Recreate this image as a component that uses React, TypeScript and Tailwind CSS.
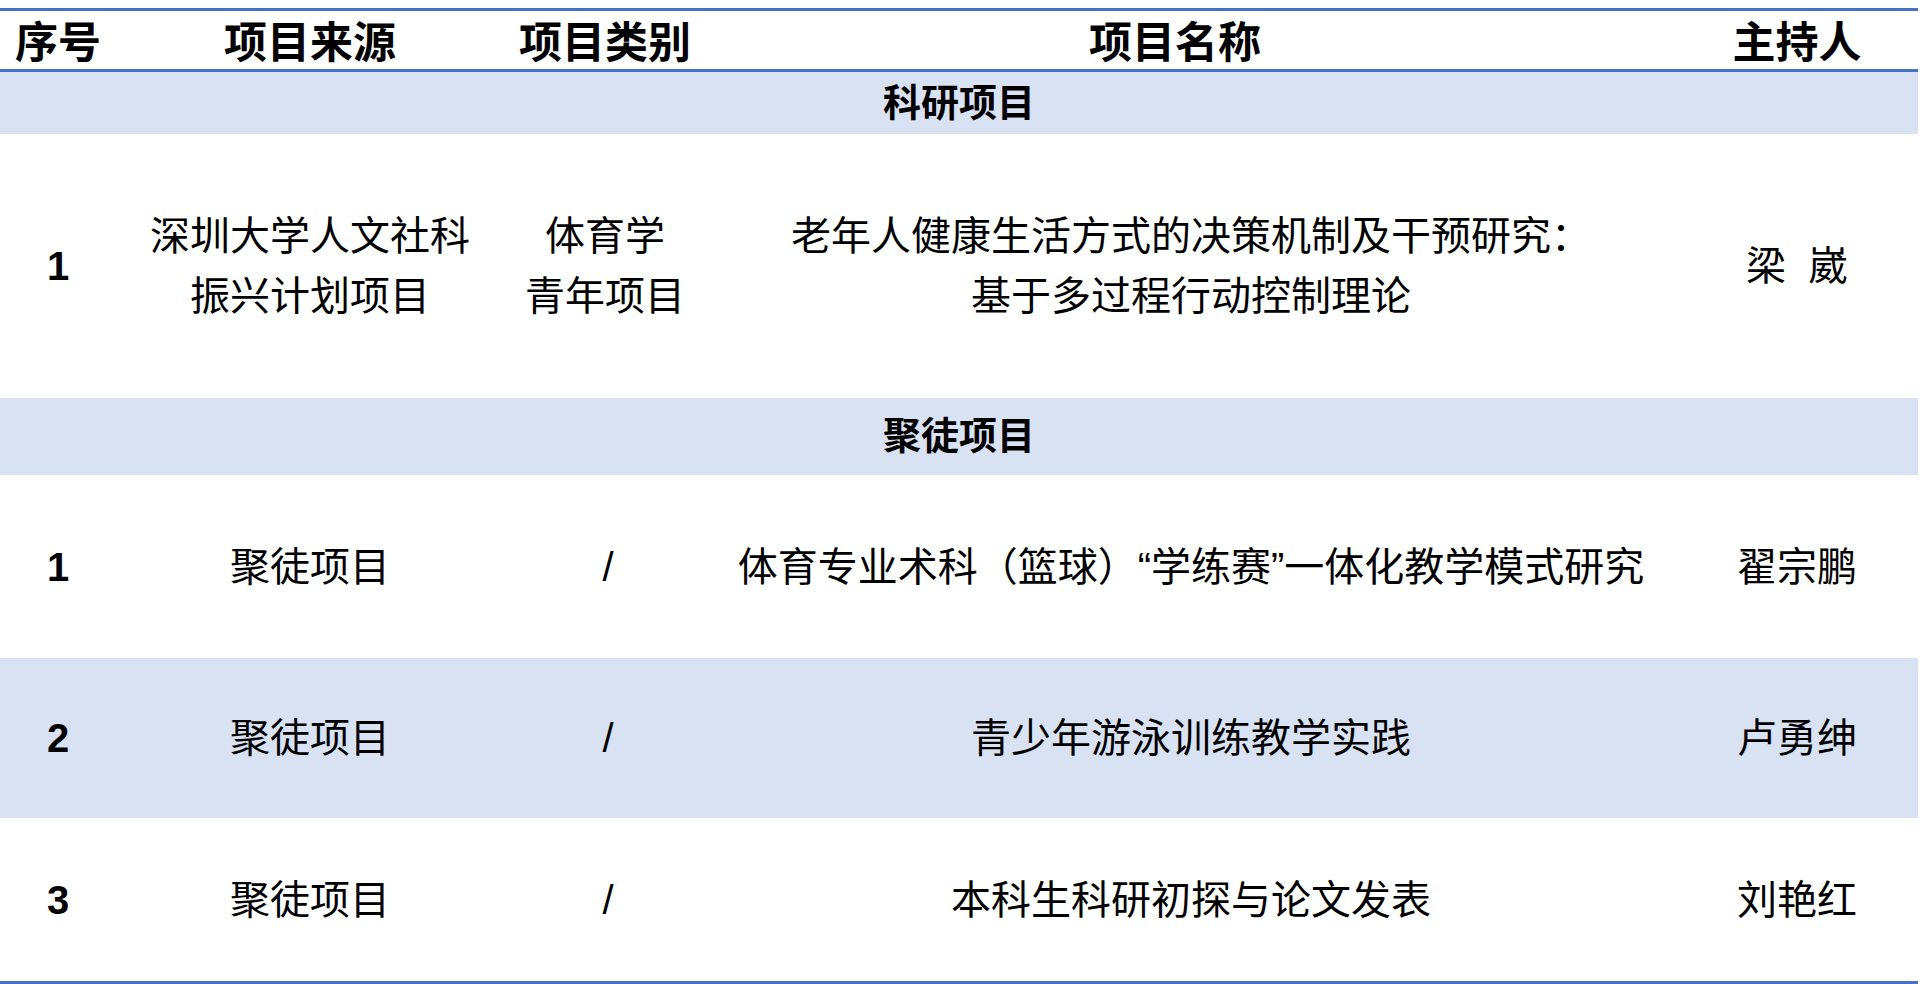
import React from "react";

const grid = "grid grid-cols-[116px_388px_202px_970px_1fr] items-center text-center";

type Row = { no: string; source: string[]; type: string[]; name: string[]; host: string; h: string; shaded?: boolean };

const research: Row[] = [
  {
    no: "1",
    source: ["深圳大学人文社科", "振兴计划项目"],
    type: ["体育学", "青年项目"],
    name: ["老年人健康生活方式的决策机制及干预研究：", "基于多过程行动控制理论"],
    host: "梁\u00a0\u00a0崴",
    h: "h-[264px]",
  },
];

const apprentice: Row[] = [
  { no: "1", source: ["聚徒项目"], type: ["/"], name: ["体育专业术科（篮球）“学练赛”一体化教学模式研究"], host: "翟宗鹏", h: "h-[183px]" },
  { no: "2", source: ["聚徒项目"], type: ["/"], name: ["青少年游泳训练教学实践"], host: "卢勇绅", h: "h-[160px]", shaded: true },
  { no: "3", source: ["聚徒项目"], type: ["/"], name: ["本科生科研初探与论文发表"], host: "刘艳红", h: "h-[163px]" },
];

function Lines({ items }: { items: string[] }) {
  return (
    <div className="leading-[60px]">
      {items.map((t) => (
        <div key={t} className={t === "/" ? "pl-[6px]" : ""}>
          {t}
        </div>
      ))}
    </div>
  );
}

function DataRow({ row }: { row: Row }) {
  return (
    <div className={`${grid} ${row.h} text-[40px] ${row.shaded ? "bg-[#d9e2f3]" : "bg-white"}`}>
      <div className="font-bold">{row.no}</div>
      <Lines items={row.source} />
      <Lines items={row.type} />
      <Lines items={row.name} />
      <div className="leading-[60px]">{row.host}</div>
    </div>
  );
}

function Band({ title, h }: { title: string; h: string }) {
  return (
    <div className={`flex items-center justify-center ${h} bg-[#d9e2f3] text-[38px] font-bold`}>
      {title}
    </div>
  );
}

export default function App() {
  return (
    <div className="w-[1920px] h-[984px] bg-white pt-2 text-black font-['Liberation_Sans','Noto_Sans_CJK_SC',sans-serif]">
      <div className="w-[1918px] border-y-[3px] border-[#4472c4]">
        {/* 表头 */}
        <div className={`${grid} h-[61px] border-b-[3px] border-[#4472c4] text-[43px] font-bold`}>
          <div>序号</div>
          <div>项目来源</div>
          <div>项目类别</div>
          <div className="pr-[32px]">项目名称</div>
          <div>主持人</div>
        </div>

        <Band title="科研项目" h="h-[62px]" />
        {research.map((r) => (
          <DataRow key={"r" + r.no} row={r} />
        ))}

        <Band title="聚徒项目" h="h-[77px]" />
        {apprentice.map((r) => (
          <DataRow key={"a" + r.no} row={r} />
        ))}
      </div>
    </div>
  );
}
